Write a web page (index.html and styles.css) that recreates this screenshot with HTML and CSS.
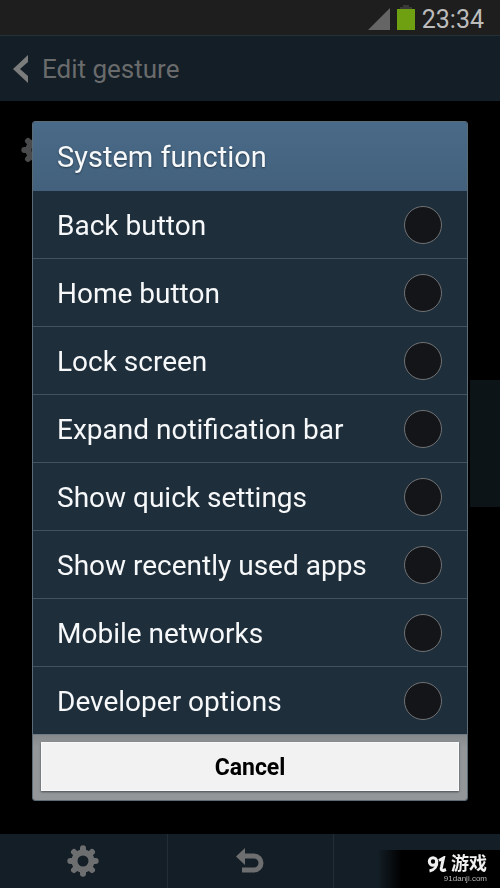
FILE: index.html
```html
<!DOCTYPE html>
<html lang="en">
<head>
<meta charset="utf-8">
<meta name="viewport" content="width=device-width, initial-scale=1">
<title>Edit gesture</title>
<link rel="stylesheet" href="styles.css">
</head>
<body>
<svg class="defs" width="0" height="0" aria-hidden="true">
  <symbol id="gear" viewBox="-16 -16 32 32">
    <circle r="8.5" fill="none" stroke="currentColor" stroke-width="6"/>
    <g stroke="currentColor" stroke-width="6" stroke-linecap="round">
      <path d="M0-10.500V-12.700M0 10.500V12.700M-10.500 0H-12.700M10.500 0H12.700M-7.500-7.500L-9-9M7.500-7.500L9-9M-7.500 7.500L-9 9M7.500 7.500L9 9"/>
    </g>
  </symbol>
</svg>
<div class="screen">
  <div class="status">
    <svg class="signal" viewBox="0 0 22 22" aria-hidden="true"><path d="M22 0V22H0Z"/></svg>
    <svg class="battery" viewBox="0 0 18 25" aria-hidden="true"><path class="cap" d="M6 0H12V2H15V5H3V2H6Z"/><path class="cell" d="M0 4H18V25H0Z"/></svg>
    <time>23:34</time>
  </div>
  <header class="appbar">
    <button class="back" type="button" aria-label="Back"><svg viewBox="0 0 15 28" aria-hidden="true"><path d="M15 0V7L7 14L15 21V28L0 14Z"/></svg></button>
    <h1>Edit gesture</h1>
  </header>
  <main class="content">
    <svg class="content-gear" aria-hidden="true"><use href="#gear"/></svg>
    <div class="side-panel"></div>
  </main>
  <nav class="toolbar">
    <button type="button" aria-label="Settings"><svg class="tool-gear" aria-hidden="true"><use href="#gear"/></svg></button>
    <button type="button" aria-label="Undo"><svg class="tool-undo" viewBox="0 0 28 26" aria-hidden="true"><path class="head" d="M0 8.500L9 0V17Z"/><path class="tail" d="M8 8H18A7 7 0 0 1 18 22H6"/></svg></button>
    <button type="button" aria-label="More"></button>
  </nav>
</div>
<div class="overlay">
  <form class="dialog" role="dialog" aria-labelledby="dialog-title">
    <h2 id="dialog-title">System function</h2>
    <div class="options">
      <label><span>Back button</span><input type="radio" name="fn"></label>
      <label><span>Home button</span><input type="radio" name="fn"></label>
      <label><span>Lock screen</span><input type="radio" name="fn"></label>
      <label><span>Expand notification bar</span><input type="radio" name="fn"></label>
      <label><span>Show quick settings</span><input type="radio" name="fn"></label>
      <label><span>Show recently used apps</span><input type="radio" name="fn"></label>
      <label><span>Mobile networks</span><input type="radio" name="fn"></label>
      <label><span>Developer options</span><input type="radio" name="fn"></label>
    </div>
    <div class="actions"><button type="button">Cancel</button></div>
  </form>
</div>
<div class="watermark">
  <div class="brand">
    <svg viewBox="0 0 20 17" aria-hidden="true"><circle cx="6" cy="5.500" r="3.700"/><path d="M9.700 4.500C10.500 10 7.500 14 2.500 15"/><path d="M12 4.500L16.500 2L14.500 11Q13.500 15 16.500 14.500L19 13.500"/></svg>
    <span>游戏</span>
  </div>
  <div class="site">91danji.com</div>
</div>
</body>
</html>
```
FILE: styles.css
```css
* {
  box-sizing: border-box;
}

body {
  margin: 0;
  background: #000;
  font-family: Roboto, "Noto Sans CJK SC", sans-serif;
}

h1,
h2 {
  margin: 0;
  font-weight: 400;
}

button {
  margin: 0;
  padding: 0;
  border: 0;
  background: none;
  color: inherit;
  font-family: inherit;
}

svg {
  display: block;
}

.defs {
  position: absolute;
}

.screen {
  display: flex;
  flex-direction: column;
  min-height: 100vh;
}

.status {
  display: flex;
  align-items: center;
  justify-content: flex-end;
  gap: 7px;
  height: 35px;
  padding: 3px 16px 0 0;
  background: #1e1e1e;
  color: #bcbcbc;
  font-size: 25px;
}

.signal {
  width: 22px;
  height: 22px;
  fill: #656565;
}

.battery {
  width: 18px;
  height: 25px;
  margin-bottom: 3px;
}

.cap {
  fill: #3a3a38;
}

.cell {
  fill: #6fa012;
}

.appbar {
  display: flex;
  align-items: center;
  gap: 14px;
  height: 66px;
  padding: 0 13px;
  border-top: 1px solid #253036;
  background: #141e26;
  color: #6a6b6c;
}

.appbar h1 {
  font-size: 26px;
}

.back svg {
  width: 15px;
  height: 28px;
  fill: #7b7c7c;
}

.content {
  display: flex;
  flex: 1;
  align-items: flex-start;
  justify-content: space-between;
  padding-left: 21px;
}

.content-gear {
  width: 32px;
  height: 32px;
  margin-top: 33px;
  color: #494a4b;
}

.side-panel {
  width: 30px;
  height: 127px;
  margin-top: 279px;
  background: #0d1418;
}

.toolbar {
  display: grid;
  grid-template-columns: repeat(3, 1fr);
  height: 54px;
  background: #141e26;
  color: #6d6e6f;
}

.toolbar button {
  display: grid;
  place-items: center;
}

.toolbar button + button {
  border-left: 1px solid #222e36;
}

.tool-gear {
  width: 32px;
  height: 32px;
}

.tool-undo {
  width: 28px;
  height: 26px;
}

.head {
  fill: currentColor;
}

.tail {
  fill: none;
  stroke: currentColor;
  stroke-width: 5;
}

.overlay {
  position: fixed;
  inset: 0;
  display: flex;
  align-items: center;
  padding: 34px 32px 0;
}

.dialog {
  flex: 1;
  overflow: hidden;
  border: 1px solid #5c6c77;
  border-radius: 3px;
  background: #1f2e3b;
  color: #f6f8f9;
}

.dialog h2 {
  padding: 2px 24px 0;
  background: linear-gradient(#496a88, #43617c);
  font-size: 29px;
  line-height: 67px;
  text-shadow: 0 1px 2px #26394a;
}

.options label {
  display: flex;
  align-items: center;
  justify-content: space-between;
  height: 68px;
  padding: 0 25px 0 24px;
  border-bottom: 1px solid #41525f;
  font-size: 28px;
}

.options span {
  padding-top: 2px;
}

.options label:last-child {
  border-bottom-color: #6f7b84;
}

.options input {
  width: 38px;
  height: 38px;
  margin: 0;
  border: 1px solid #707274;
  border-radius: 50%;
  appearance: none;
  background: #131518;
}

.options input:checked {
  background: radial-gradient(#7cb518 40%, #131518 45%);
}

.actions {
  padding: 7px 8px 9px;
  background: linear-gradient(#85898c, #93979a 12px);
}

.actions button {
  display: block;
  width: 100%;
  height: 49px;
  padding-top: 2px;
  border: 1px solid #fafafa;
  background: #f2f2f2;
  box-shadow: 0 1px 2px #4a4d50;
  color: #000;
  font-size: 23px;
  font-weight: 700;
}

.watermark {
  position: fixed;
  right: 0;
  bottom: 0;
  display: flex;
  flex-direction: column;
  align-items: flex-end;
  width: 122px;
  height: 38px;
  padding: 5px 13px 0 0;
  background: linear-gradient(90deg, transparent, #000 24px);
  color: #f0f0f0;
}

.brand {
  display: flex;
  align-items: center;
  gap: 4px;
  font-size: 18px;
  font-weight: 700;
  line-height: 18px;
}

.brand svg {
  width: 20px;
  height: 17px;
  fill: none;
  stroke: currentColor;
  stroke-width: 3;
}

.site {
  color: #b8b8b8;
  font-family: "Liberation Sans", sans-serif;
  font-size: 8px;
  line-height: 12px;
}
```
